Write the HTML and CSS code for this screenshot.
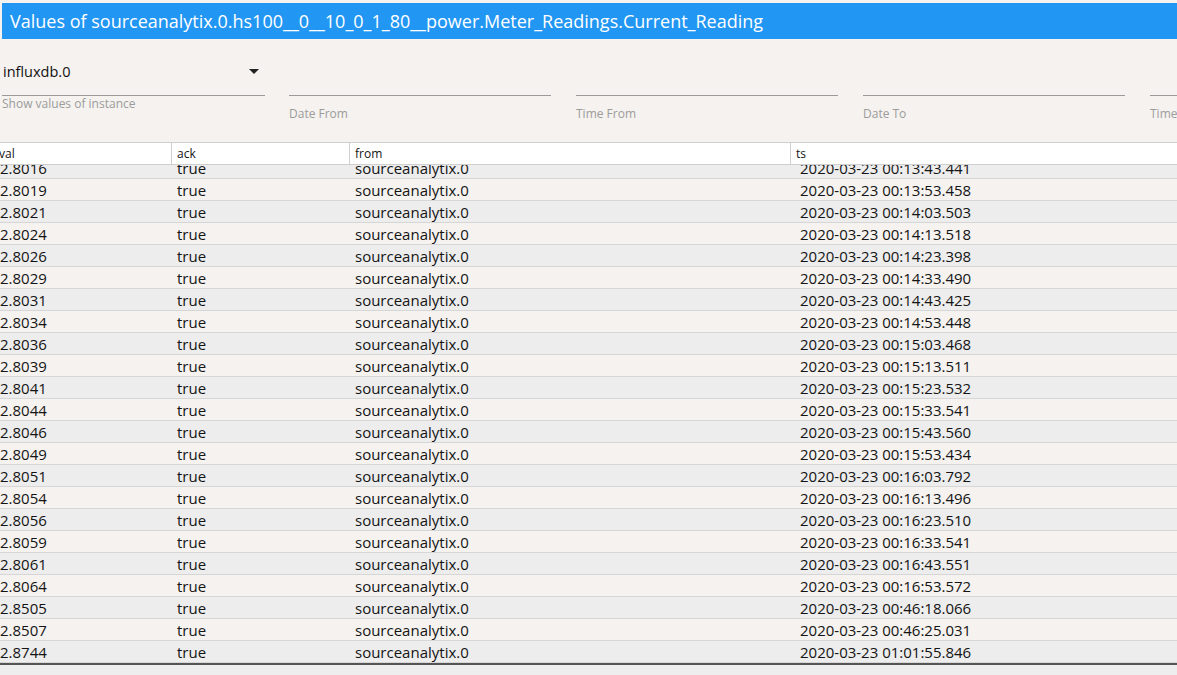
FILE: index.html
```html
<!DOCTYPE html>
<html>
<head>
<meta charset="utf-8">
<link rel="stylesheet" href="styles.css">
</head>
<body>
<div class="titlebar">Values of sourceanalytix.0.hs100__0__10_0_1_80__power.Meter_Readings.Current_Reading</div>
<div class="filters">
  <div class="field select-field">
    <div class="input"><span class="value">influxdb.0</span><span class="arrow"></span></div>
    <div class="helper">Show values of instance</div>
  </div>
  <div class="field">
    <div class="input"></div>
    <div class="label">Date From</div>
  </div>
  <div class="field">
    <div class="input"></div>
    <div class="label">Time From</div>
  </div>
  <div class="field">
    <div class="input"></div>
    <div class="label">Date To</div>
  </div>
  <div class="field">
    <div class="input"></div>
    <div class="label">Time To</div>
  </div>
</div>
<div class="grid">
  <div class="grid-head">
    <div class="hcell c-val">val</div>
    <div class="hcell c-ack">ack</div>
    <div class="hcell c-from">from</div>
    <div class="hcell c-ts">ts</div>
  </div>
  <div class="grid-body">
    <div class="rows">
      <div class="row"><div class="cell c-val">2.8016</div><div class="cell c-ack">true</div><div class="cell c-from">sourceanalytix.0</div><div class="cell c-ts">2020-03-23 00:13:43.441</div></div>
      <div class="row"><div class="cell c-val">2.8019</div><div class="cell c-ack">true</div><div class="cell c-from">sourceanalytix.0</div><div class="cell c-ts">2020-03-23 00:13:53.458</div></div>
      <div class="row"><div class="cell c-val">2.8021</div><div class="cell c-ack">true</div><div class="cell c-from">sourceanalytix.0</div><div class="cell c-ts">2020-03-23 00:14:03.503</div></div>
      <div class="row"><div class="cell c-val">2.8024</div><div class="cell c-ack">true</div><div class="cell c-from">sourceanalytix.0</div><div class="cell c-ts">2020-03-23 00:14:13.518</div></div>
      <div class="row"><div class="cell c-val">2.8026</div><div class="cell c-ack">true</div><div class="cell c-from">sourceanalytix.0</div><div class="cell c-ts">2020-03-23 00:14:23.398</div></div>
      <div class="row"><div class="cell c-val">2.8029</div><div class="cell c-ack">true</div><div class="cell c-from">sourceanalytix.0</div><div class="cell c-ts">2020-03-23 00:14:33.490</div></div>
      <div class="row"><div class="cell c-val">2.8031</div><div class="cell c-ack">true</div><div class="cell c-from">sourceanalytix.0</div><div class="cell c-ts">2020-03-23 00:14:43.425</div></div>
      <div class="row"><div class="cell c-val">2.8034</div><div class="cell c-ack">true</div><div class="cell c-from">sourceanalytix.0</div><div class="cell c-ts">2020-03-23 00:14:53.448</div></div>
      <div class="row"><div class="cell c-val">2.8036</div><div class="cell c-ack">true</div><div class="cell c-from">sourceanalytix.0</div><div class="cell c-ts">2020-03-23 00:15:03.468</div></div>
      <div class="row"><div class="cell c-val">2.8039</div><div class="cell c-ack">true</div><div class="cell c-from">sourceanalytix.0</div><div class="cell c-ts">2020-03-23 00:15:13.511</div></div>
      <div class="row"><div class="cell c-val">2.8041</div><div class="cell c-ack">true</div><div class="cell c-from">sourceanalytix.0</div><div class="cell c-ts">2020-03-23 00:15:23.532</div></div>
      <div class="row"><div class="cell c-val">2.8044</div><div class="cell c-ack">true</div><div class="cell c-from">sourceanalytix.0</div><div class="cell c-ts">2020-03-23 00:15:33.541</div></div>
      <div class="row"><div class="cell c-val">2.8046</div><div class="cell c-ack">true</div><div class="cell c-from">sourceanalytix.0</div><div class="cell c-ts">2020-03-23 00:15:43.560</div></div>
      <div class="row"><div class="cell c-val">2.8049</div><div class="cell c-ack">true</div><div class="cell c-from">sourceanalytix.0</div><div class="cell c-ts">2020-03-23 00:15:53.434</div></div>
      <div class="row"><div class="cell c-val">2.8051</div><div class="cell c-ack">true</div><div class="cell c-from">sourceanalytix.0</div><div class="cell c-ts">2020-03-23 00:16:03.792</div></div>
      <div class="row"><div class="cell c-val">2.8054</div><div class="cell c-ack">true</div><div class="cell c-from">sourceanalytix.0</div><div class="cell c-ts">2020-03-23 00:16:13.496</div></div>
      <div class="row"><div class="cell c-val">2.8056</div><div class="cell c-ack">true</div><div class="cell c-from">sourceanalytix.0</div><div class="cell c-ts">2020-03-23 00:16:23.510</div></div>
      <div class="row"><div class="cell c-val">2.8059</div><div class="cell c-ack">true</div><div class="cell c-from">sourceanalytix.0</div><div class="cell c-ts">2020-03-23 00:16:33.541</div></div>
      <div class="row"><div class="cell c-val">2.8061</div><div class="cell c-ack">true</div><div class="cell c-from">sourceanalytix.0</div><div class="cell c-ts">2020-03-23 00:16:43.551</div></div>
      <div class="row"><div class="cell c-val">2.8064</div><div class="cell c-ack">true</div><div class="cell c-from">sourceanalytix.0</div><div class="cell c-ts">2020-03-23 00:16:53.572</div></div>
      <div class="row"><div class="cell c-val">2.8505</div><div class="cell c-ack">true</div><div class="cell c-from">sourceanalytix.0</div><div class="cell c-ts">2020-03-23 00:46:18.066</div></div>
      <div class="row"><div class="cell c-val">2.8507</div><div class="cell c-ack">true</div><div class="cell c-from">sourceanalytix.0</div><div class="cell c-ts">2020-03-23 00:46:25.031</div></div>
      <div class="row"><div class="cell c-val">2.8744</div><div class="cell c-ack">true</div><div class="cell c-from">sourceanalytix.0</div><div class="cell c-ts">2020-03-23 01:01:55.846</div></div>
    </div>
  </div>
</div>
<div class="footer"></div>
</body>
</html>
```
FILE: styles.css
```css
html, body {
  margin: 0;
  padding: 0;
  height: 100%;
  overflow: hidden;
}
body {
  background: #f5f2ef;
  font-family: "Open Sans", "Noto Sans", sans-serif;
  color: #141414;
}
.titlebar {
  margin: 3px 0 0 2px;
  height: 36px;
  line-height: 36px;
  background: #2196f3;
  color: #fff;
  font-size: 18px;
  padding-left: 8px;
  white-space: nowrap;
  overflow: hidden;
}
.filters {
  display: flex;
  gap: 25px;
  padding-left: 2px;
  margin-top: 18px;
  height: 85px;
  overflow: hidden;
}
.field {
  flex: 0 0 262px;
  display: flex;
  flex-direction: column;
}
.select-field {
  flex-basis: 263px;
  margin-right: -1px;
}
.input {
  height: 39px;
  border-bottom: 1px solid #9a9a9a;
  display: flex;
  align-items: center;
  justify-content: space-between;
  box-sizing: border-box;
}
.select-field .input {
  padding-bottom: 9px;
}
.value {
  font-size: 14.5px;
  margin-left: 1px;
  color: #111;
}
.arrow {
  width: 0;
  height: 0;
  border-left: 5px solid transparent;
  border-right: 5px solid transparent;
  border-top: 5px solid #222;
  margin-right: 6px;
}
.helper {
  font-size: 12px;
  color: #9c9c9c;
  margin-top: 0;
  line-height: 16px;
  white-space: nowrap;
}
.label {
  font-size: 12px;
  color: #9c9c9c;
  margin-top: 10px;
  line-height: 16px;
  white-space: nowrap;
}
.grid {
  overflow: hidden;
  border-bottom: 2px solid #555;
}
.grid-head, .row {
  display: flex;
  margin-left: -6px;
  width: 1200px;
}
.grid-head {
  background: #fff;
  border-top: 1px solid #cfcfcf;
  border-bottom: 1px solid #cfcfcf;
  height: 21px;
  font-size: 12px;
}
.hcell {
  box-sizing: border-box;
  padding-left: 5px;
  line-height: 21px;
  border-left: 1px solid #cfcfcf;
}
.hcell.c-val { border-left: none; }
.c-val { flex: 0 0 177px; box-sizing: border-box; }
.c-ack { flex: 0 0 178px; box-sizing: border-box; }
.c-from { flex: 0 0 441px; box-sizing: border-box; }
.c-ts { flex: 1 1 auto; box-sizing: border-box; }
.grid-body {
  height: 498px;
  overflow: hidden;
}
.rows {
  margin-top: -8px;
}
.row {
  height: 21px;
  border-bottom: 1px solid #d6d6d6;
  font-size: 15px;
  line-height: 22px;
}
.row:nth-child(odd) { background: #ededed; }
.row:nth-child(even) { background: #f5f2ef; }
.cell {
  padding-left: 6px;
  white-space: nowrap;
}
.cell.c-ts { padding-left: 10px; }
.footer {
  background: #eeeeee;
  height: 20px;
}
```
